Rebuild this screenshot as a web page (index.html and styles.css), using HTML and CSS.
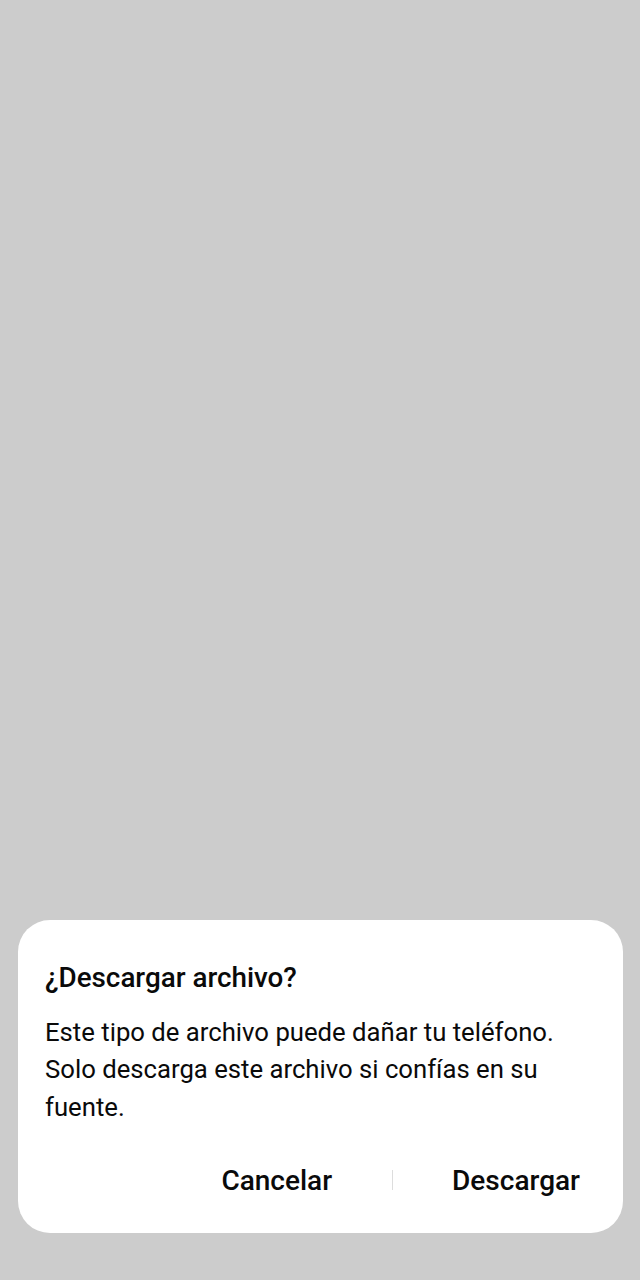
FILE: index.html
```html
<!DOCTYPE html>
<html lang="es">
	<head>
		<meta charset="UTF-8">
		<title>Descargar archivo</title>
		<link rel="stylesheet" href="styles.css">
	</head>
	<body>
		<div class="dialog">
			<h1 class="title">¿Descargar archivo?</h1>
			<p class="message">Este tipo de archivo puede dañar tu teléfono. Solo descarga este archivo si confías en su fuente.</p>
			<div class="actions">
				<button class="action">Cancelar</button>
				<span class="divider"></span>
				<button class="action last">Descargar</button>
			</div>
		</div>
	</body>
</html>
```

FILE: styles.css
```css
html {
	font-family: Roboto, "Noto Sans", sans-serif;
}

body {
	margin: 0;
	height: 1280px;
	background-color: #cccccc;
	display: flex;
	flex-direction: column;
	justify-content: flex-end;
}

.dialog {
	background-color: white;
	border-radius: 32px;
	margin: 0 17px 47px 18px;
	padding: 42px 0 25px 27px;
	color: #0a0a0a;
}

.title {
	margin: 0;
	font-size: 27.8px;
	font-weight: 500;
	line-height: 32px;
}

.message {
	margin: 20px 40px 0 0;
	font-size: 25.7px;
	line-height: 37.5px;
}

.actions {
	display: flex;
	justify-content: flex-end;
	align-items: center;
	margin-top: 26px;
	height: 56px;
}

.action {
	background: none;
	border: none;
	font-family: inherit;
	font-size: 28px;
	font-weight: 500;
	color: #0a0a0a;
	padding: 0 60px;
	height: 56px;
}

.action.last {
	padding: 0 43px 0 59px;
}

.divider {
	width: 1px;
	height: 20px;
	background-color: #dddddd;
}
```
